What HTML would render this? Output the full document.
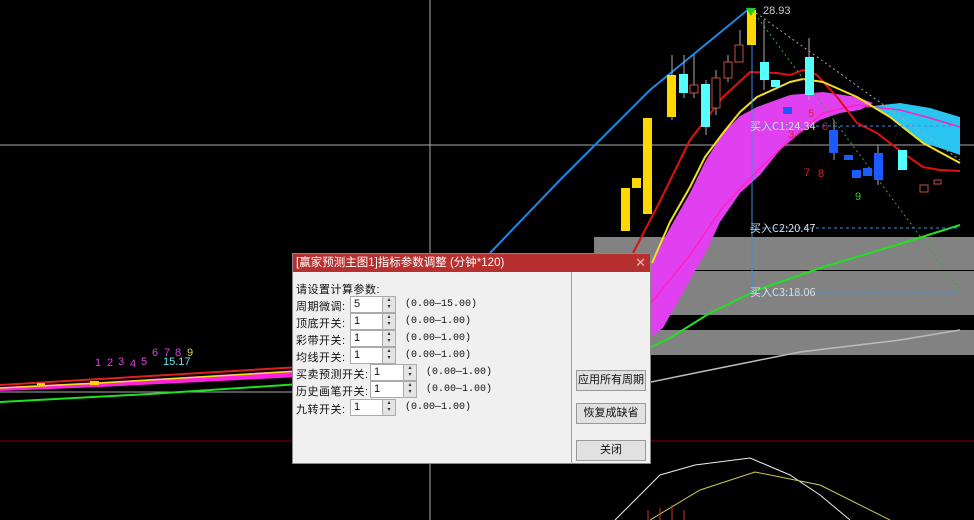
<!DOCTYPE html>
<html><head><meta charset="utf-8">
<style>
*{margin:0;padding:0;box-sizing:border-box}
body{width:974px;height:520px;background:#000;position:relative;overflow:hidden;font-family:"Liberation Sans","Noto Sans CJK SC",sans-serif}
svg{position:absolute;left:0;top:0}
.dlg{position:absolute;left:292px;top:253px;width:359px;height:211px;background:#f0f0f0;border:1px solid #888}
.tt{height:18px;background:#b5302e;color:#fff;font-size:11.5px;line-height:18px;padding-left:3px;position:relative;white-space:nowrap}
.tt .x{position:absolute;right:4px;top:0;color:#e8b8b8;font-size:13px}
.sep{position:absolute;left:278px;top:18px;width:1px;height:192px;background:#a0a0a0}
.l{position:absolute;font-size:11px;color:#111;white-space:nowrap;letter-spacing:0.5px}
.in{position:absolute;height:17px;background:#fff;border:1px solid #aaa;font-size:11px;line-height:15px;padding-left:3px;color:#111}
.sp{position:absolute;width:14px;height:17px;background:#e4e4e4;border:1px solid #aaa;font-size:6px;line-height:7px;text-align:center;color:#333}
.r{position:absolute;font-size:10px;color:#111;font-family:"Liberation Mono","Noto Sans CJK SC",monospace;white-space:nowrap}
.b{position:absolute;left:283px;width:70px;height:21px;background:#e1e1e1;border:1px solid #999;font-size:11px;text-align:center;line-height:19px;color:#111;white-space:nowrap}
</style></head><body>
<svg width="974" height="520" viewBox="0 0 974 520">
<line x1="0" y1="145" x2="974" y2="145" stroke="#aaa" stroke-width="1"/>
<line x1="430" y1="0" x2="430" y2="520" stroke="#aaa" stroke-width="1"/>
<line x1="0" y1="441" x2="974" y2="441" stroke="#800" stroke-width="1"/>
<rect x="594" y="237" width="380" height="33" fill="#828282"/>
<rect x="594" y="271" width="380" height="44" fill="#828282"/>
<rect x="594" y="330" width="380" height="25" fill="#828282"/>
<polyline points="490,253 560,180 650,90 750,8" fill="none" stroke="#1e88e5" stroke-width="2"/>
<polygon points="651,263 670,228 690,193 705,162 723,133 740,116 757,107 790,95 823,92 857,97 873,103 860,110 840,113 820,120 800,133 780,150 760,175 740,193 720,222 707,250 690,280 663,328 651,337" fill="#e040f0"/>
<polygon points="873,106 900,103 930,108 960,117 960,155 940,148 923,143 905,130 890,117" fill="#29c5f0"/>
<polyline points="651,303 690,255 723,207 760,168 790,140 823,113 857,105 900,110 930,118 960,127" fill="none" stroke="#ff20c0" stroke-width="1.5"/>
<polyline points="633,253 657,207 690,140 723,97 750,72 777,73 790,75 803,70 817,75 837,97 857,123 877,133 903,153 923,167 940,170 960,171" fill="none" stroke="#e01010" stroke-width="2" stroke-linejoin="round"/>
<polyline points="652,263 670,222 690,187 705,157 723,133 740,112 757,97 790,82 803,79 823,82 857,97 890,117 923,143 960,163" fill="none" stroke="#f0e020" stroke-width="2" stroke-linejoin="round"/>
<polyline points="651,347 670,338 710,313 757,290 823,267 890,247 960,225" fill="none" stroke="#20e020" stroke-width="2"/>
<polyline points="651,382 700,372 750,362 800,352 850,346 900,340 960,330" fill="none" stroke="#bbb" stroke-width="1.5"/>
<line x1="752" y1="10" x2="752" y2="290" stroke="#3a8ee0"/>
<line x1="752" y1="10" x2="960" y2="290" stroke="#3a3" stroke-dasharray="2,3"/>
<line x1="752" y1="10" x2="960" y2="160" stroke="#aaa" stroke-dasharray="2,3"/>
<line x1="750" y1="126" x2="960" y2="126" stroke="#3a8ee0" stroke-dasharray="3,3"/>
<line x1="750" y1="228" x2="960" y2="228" stroke="#3a8ee0" stroke-dasharray="3,3"/>
<line x1="750" y1="292" x2="960" y2="292" stroke="#3a8ee0" stroke-dasharray="3,3"/>
<g stroke="#aaa" stroke-width="1"><line x1="684" y1="55" x2="684" y2="98"/><line x1="706" y1="80" x2="706" y2="135"/><line x1="764" y1="20" x2="764" y2="90"/><line x1="809" y1="38" x2="809" y2="100"/><line x1="694" y1="55" x2="694" y2="98"/><line x1="716" y1="70" x2="716" y2="115"/><line x1="728" y1="55" x2="728" y2="82"/><line x1="740" y1="30" x2="740" y2="62"/><line x1="672" y1="55" x2="672" y2="120"/><line x1="834" y1="120" x2="834" y2="160"/><line x1="878" y1="145" x2="878" y2="185"/></g>
<g fill="#ffd800"><rect x="621" y="188" width="9" height="43"/><rect x="632" y="178" width="9" height="10"/><rect x="643" y="118" width="9" height="96"/><rect x="667" y="75" width="9" height="42"/><rect x="747" y="10" width="9" height="35"/></g>
<g fill="#5ff"><rect x="679" y="74" width="9" height="19"/><rect x="701" y="84" width="9" height="43"/><rect x="760" y="62" width="9" height="18"/><rect x="771" y="80" width="9" height="7"/><rect x="805" y="57" width="9" height="38"/><rect x="898" y="150" width="9" height="20"/></g>
<g fill="#1a5cff"><rect x="783" y="107" width="9" height="7"/><rect x="829" y="130" width="9" height="23"/><rect x="844" y="155" width="9" height="5"/><rect x="852" y="170" width="9" height="8"/><rect x="863" y="168" width="9" height="8"/><rect x="874" y="153" width="9" height="27"/></g>
<g fill="#000" stroke="#c05040"><rect x="690" y="85" width="8" height="8"/><rect x="712" y="78" width="8" height="30"/><rect x="724" y="62" width="8" height="16"/><rect x="735" y="45" width="8" height="17"/><rect x="920" y="185" width="8" height="7"/><rect x="934" y="180" width="7" height="4"/></g>
<polygon points="746,8 756,8 751,16" fill="#2c2"/>
<g font-size="11" font-family="Liberation Sans,sans-serif"><text x="763" y="14" fill="#ccc">28.93</text>
<text x="750" y="130" fill="#ddd" font-family="Noto Sans CJK SC,sans-serif">买入C1:24.34</text>
<text x="750" y="232" fill="#ddd" font-family="Noto Sans CJK SC,sans-serif">买入C2:20.47</text>
<text x="750" y="296" fill="#ddd" font-family="Noto Sans CJK SC,sans-serif">买入C3:18.06</text>
<g fill="#e02020"><text x="808" y="117">5</text><text x="822" y="130">6</text><text x="788" y="138">3</text><text x="804" y="176">7</text><text x="818" y="177">8</text></g>
<text x="855" y="200" fill="#3c3">9</text>
<g fill="#e040e0"><text x="95" y="366">1</text><text x="107" y="366">2</text><text x="118" y="365">3</text><text x="130" y="367">4</text><text x="141" y="365">5</text><text x="152" y="356">6</text><text x="164" y="356">7</text><text x="175" y="356">8</text></g><text x="187" y="356" fill="#dd4">9</text><text x="163" y="365" fill="#5ee">15.17</text></g>
<polygon points="0,387 100,382 200,376 300,370 300,377 200,382 100,387 0,391" fill="#ff20e0"/>
<polyline points="0,385 100,379 200,373 300,367" fill="none" stroke="#e02020" stroke-width="2"/>
<polyline points="0,388 100,383 200,377 300,371" fill="none" stroke="#f0e020" stroke-width="1.5"/>
<line x1="0" y1="392" x2="300" y2="392" stroke="#aaa"/>
<polyline points="0,402 150,394 300,384" fill="none" stroke="#20e020" stroke-width="2"/>
<g fill="#ffd800"><rect x="90" y="381" width="9" height="4"/><rect x="37" y="383" width="8" height="2"/></g>
<polyline points="615,520 640,495 660,475 695,465 750,458 790,475 820,495 850,520" fill="none" stroke="#eee" stroke-width="1"/>
<polyline points="650,520 700,490 755,472 820,485 890,520" fill="none" stroke="#cc5" stroke-width="1"/>
<g stroke="#c33"><line x1="648" y1="510" x2="648" y2="520"/><line x1="660" y1="508" x2="660" y2="520"/><line x1="672" y1="505" x2="672" y2="520"/><line x1="684" y1="510" x2="684" y2="520"/></g>
</svg>
<div class="dlg">
<div class="tt">[赢家预测主图1]指标参数调整 (分钟*120)<span class="x">✕</span></div>
<div class="sep"></div>
<div class="l" style="left:3px;top:27px">请设置计算参数:</div>
<div class="l" style="left:3px;top:44px">周期微调:</div><div class="in" style="left:57px;top:42px;width:33px">5</div><div class="sp" style="left:89px;top:42px">▴<br>▾</div><div class="r" style="left:112px;top:45px">(0.00—15.00)</div>
<div class="l" style="left:3px;top:61px">顶底开关:</div><div class="in" style="left:57px;top:59px;width:33px">1</div><div class="sp" style="left:89px;top:59px">▴<br>▾</div><div class="r" style="left:112px;top:62px">(0.00—1.00)</div>
<div class="l" style="left:3px;top:78px">彩带开关:</div><div class="in" style="left:57px;top:76px;width:33px">1</div><div class="sp" style="left:89px;top:76px">▴<br>▾</div><div class="r" style="left:112px;top:79px">(0.00—1.00)</div>
<div class="l" style="left:3px;top:95px">均线开关:</div><div class="in" style="left:57px;top:93px;width:33px">1</div><div class="sp" style="left:89px;top:93px">▴<br>▾</div><div class="r" style="left:112px;top:96px">(0.00—1.00)</div>
<div class="l" style="left:3px;top:112px">买卖预测开关:</div><div class="in" style="left:77px;top:110px;width:34px">1</div><div class="sp" style="left:110px;top:110px">▴<br>▾</div><div class="r" style="left:133px;top:113px">(0.00—1.00)</div>
<div class="l" style="left:3px;top:129px">历史画笔开关:</div><div class="in" style="left:77px;top:127px;width:34px">1</div><div class="sp" style="left:110px;top:127px">▴<br>▾</div><div class="r" style="left:133px;top:130px">(0.00—1.00)</div>
<div class="l" style="left:3px;top:147px">九转开关:</div><div class="in" style="left:57px;top:145px;width:33px">1</div><div class="sp" style="left:89px;top:145px">▴<br>▾</div><div class="r" style="left:112px;top:148px">(0.00—1.00)</div>
<div class="b" style="top:116px">应用所有周期</div>
<div class="b" style="top:149px">恢复成缺省</div>
<div class="b" style="top:186px">关闭</div>
</div>
</body></html>
